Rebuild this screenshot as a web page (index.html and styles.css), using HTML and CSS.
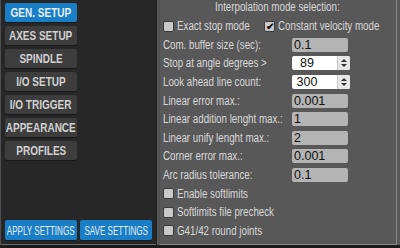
FILE: index.html
```html
<!DOCTYPE html>
<html lang="en">
<head>
  <meta charset="UTF-8" />
  <title>Settings</title>
  <link rel="stylesheet" href="styles.css">
</head>
<body>
  <div class="window">
    <div class="nav">
      <div class="nav-list">
        <button class="btn active"><span>GEN. SETUP</span></button>
        <button class="btn"><span>AXES SETUP</span></button>
        <button class="btn"><span>SPINDLE</span></button>
        <button class="btn"><span>I/O SETUP</span></button>
        <button class="btn"><span>I/O TRIGGER</span></button>
        <button class="btn"><span>APPEARANCE</span></button>
        <button class="btn"><span>PROFILES</span></button>
      </div>
      <div class="nav-actions">
        <button class="btn blue"><span>APPLY SETTINGS</span></button>
        <button class="btn blue"><span>SAVE SETTINGS</span></button>
      </div>
    </div>

    <div class="settings">
      <div class="group">
        <div class="title"><span class="t">Interpolation mode selection:</span></div>
        <div class="check-row">
          <label class="check first"><span class="box"></span><span class="t">Exact stop mode</span></label>
          <label class="check"><span class="box">&#10004;</span><span class="t">Constant velocity mode</span></label>
        </div>

        <div class="field"><span class="label"><span class="t">Com. buffer size (sec):</span></span><div class="input">0.1</div></div>
        <div class="field"><span class="label"><span class="t">Stop at angle degrees &gt;</span></span>
          <div class="spin"><div class="spin-val">89</div><div class="spin-btns"><i class="up"></i><i class="down"></i></div></div>
        </div>
        <div class="field"><span class="label"><span class="t">Look ahead line count:</span></span>
          <div class="spin"><div class="spin-val">300</div><div class="spin-btns"><i class="up"></i><i class="down"></i></div></div>
        </div>
        <div class="field"><span class="label"><span class="t">Linear error max.:</span></span><div class="input">0.001</div></div>
        <div class="field"><span class="label"><span class="t">Linear addition lenght max.:</span></span><div class="input">1</div></div>
        <div class="field"><span class="label"><span class="t">Linear unify lenght max.:</span></span><div class="input">2</div></div>
        <div class="field"><span class="label"><span class="t">Corner error max.:</span></span><div class="input">0.001</div></div>
        <div class="field"><span class="label"><span class="t">Arc radius tolerance:</span></span><div class="input">0.1</div></div>

        <label class="check line"><span class="box"></span><span class="t">Enable softlimits</span></label>
        <label class="check line"><span class="box"></span><span class="t">Softlimits file precheck</span></label>
        <label class="check line"><span class="box"></span><span class="t">G41/42 round joints</span></label>
      </div>
    </div>
  </div>
</body>
</html>
```

FILE: styles.css
```css
body {
  margin: 0;
  background: #1b1b1b;
  font-family: "Liberation Sans", Arial, sans-serif;
  color: #d8d8d8;
}

.window {
  display: flex;
  width: 400px;
  height: 245px;
}

/* left column */
.nav {
  width: 156px;
  flex-shrink: 0;
  background: #272727;
  border-left: 1px solid #505050;
  border-bottom: 1px solid #6a6a6a;
  display: flex;
  flex-direction: column;
  justify-content: space-between;
  padding: 3px 0 4px 4px;
  box-sizing: border-box;
}

.nav-list {
  display: flex;
  flex-direction: column;
  gap: 4px;
}

.nav-actions {
  display: flex;
  gap: 3px;
}

.btn {
  width: 72px;
  height: 19px;
  padding: 0;
  border: none;
  border-radius: 2px;
  background: #3d3d3d;
  color: #d2d2d2;
  font-family: inherit;
  font-weight: bold;
  font-size: 12.5px;
  white-space: nowrap;
  display: flex;
  align-items: center;
  justify-content: center;
  box-shadow: 0 1px 0 #1a1a1a;
}

.btn span {
  display: inline-block;
  transform: scaleX(0.8);
}

.btn.active,
.btn.blue {
  background: #1a7ec6;
  color: #e6eef5;
}

.btn.blue {
  height: 20px;
  font-size: 13px;
  font-weight: normal;
}

.btn.blue span {
  transform: scaleX(0.62);
}

/* right column */
.settings {
  flex: 1;
  min-width: 0;
  background: #585858;
  border-left: 1px solid #1e1e1e;
  padding-left: 2px;
}

.group {
  height: 100%;
  box-sizing: border-box;
  border-left: 1px solid #4c4c4c;
  border-right: 1px solid #8a8a8a;
  border-bottom: 1px solid #8a8a8a;
  margin-right: 3px;
  padding-left: 3px;
  font-size: 12.5px;
}

.t {
  display: inline-block;
  white-space: nowrap;
  transform: scaleX(0.78);
  transform-origin: left center;
}

.title {
  height: 17px;
  line-height: 14px;
  padding-left: 52px;
}

.check-row {
  display: flex;
  height: 18.6px;
  align-items: center;
}

.check {
  display: flex;
  align-items: center;
  gap: 3px;
  min-width: 0;
}

.check.first {
  width: 101px;
  flex-shrink: 0;
}

.check.line {
  height: 18.6px;
}

.box {
  flex-shrink: 0;
  width: 9px;
  height: 9px;
  border: 1px solid #3a3a3a;
  border-radius: 2px;
  background: #c9c9c9;
  color: #111;
  font-size: 10px;
  line-height: 9px;
  text-align: center;
  font-weight: bold;
}

.field {
  display: flex;
  align-items: center;
  height: 18.6px;
}

.label {
  width: 129px;
  flex-shrink: 0;
}

.input {
  width: 54px;
  height: 14px;
  line-height: 14px;
  background: #b4b4b4;
  color: #111;
  border-radius: 2px;
  padding-left: 2px;
  font-size: 12.5px;
}

.spin {
  display: flex;
  height: 14px;
  background: #fff;
  border-radius: 2px;
  color: #111;
}

.spin-val {
  width: 45px;
  text-align: center;
  padding-right: 15px;
  box-sizing: border-box;
  line-height: 14px;
  font-size: 12.5px;
}

.spin-btns {
  width: 12px;
  background: #e6e6e6;
  border-left: 1px solid #c8c8c8;
  border-radius: 0 2px 2px 0;
  display: flex;
  flex-direction: column;
  align-items: center;
  justify-content: center;
  gap: 2px;
}

.spin-btns i {
  width: 0;
  height: 0;
  border-left: 3px solid transparent;
  border-right: 3px solid transparent;
}

.spin-btns .up {
  border-bottom: 3px solid #333;
}

.spin-btns .down {
  border-top: 3px solid #333;
}
```
